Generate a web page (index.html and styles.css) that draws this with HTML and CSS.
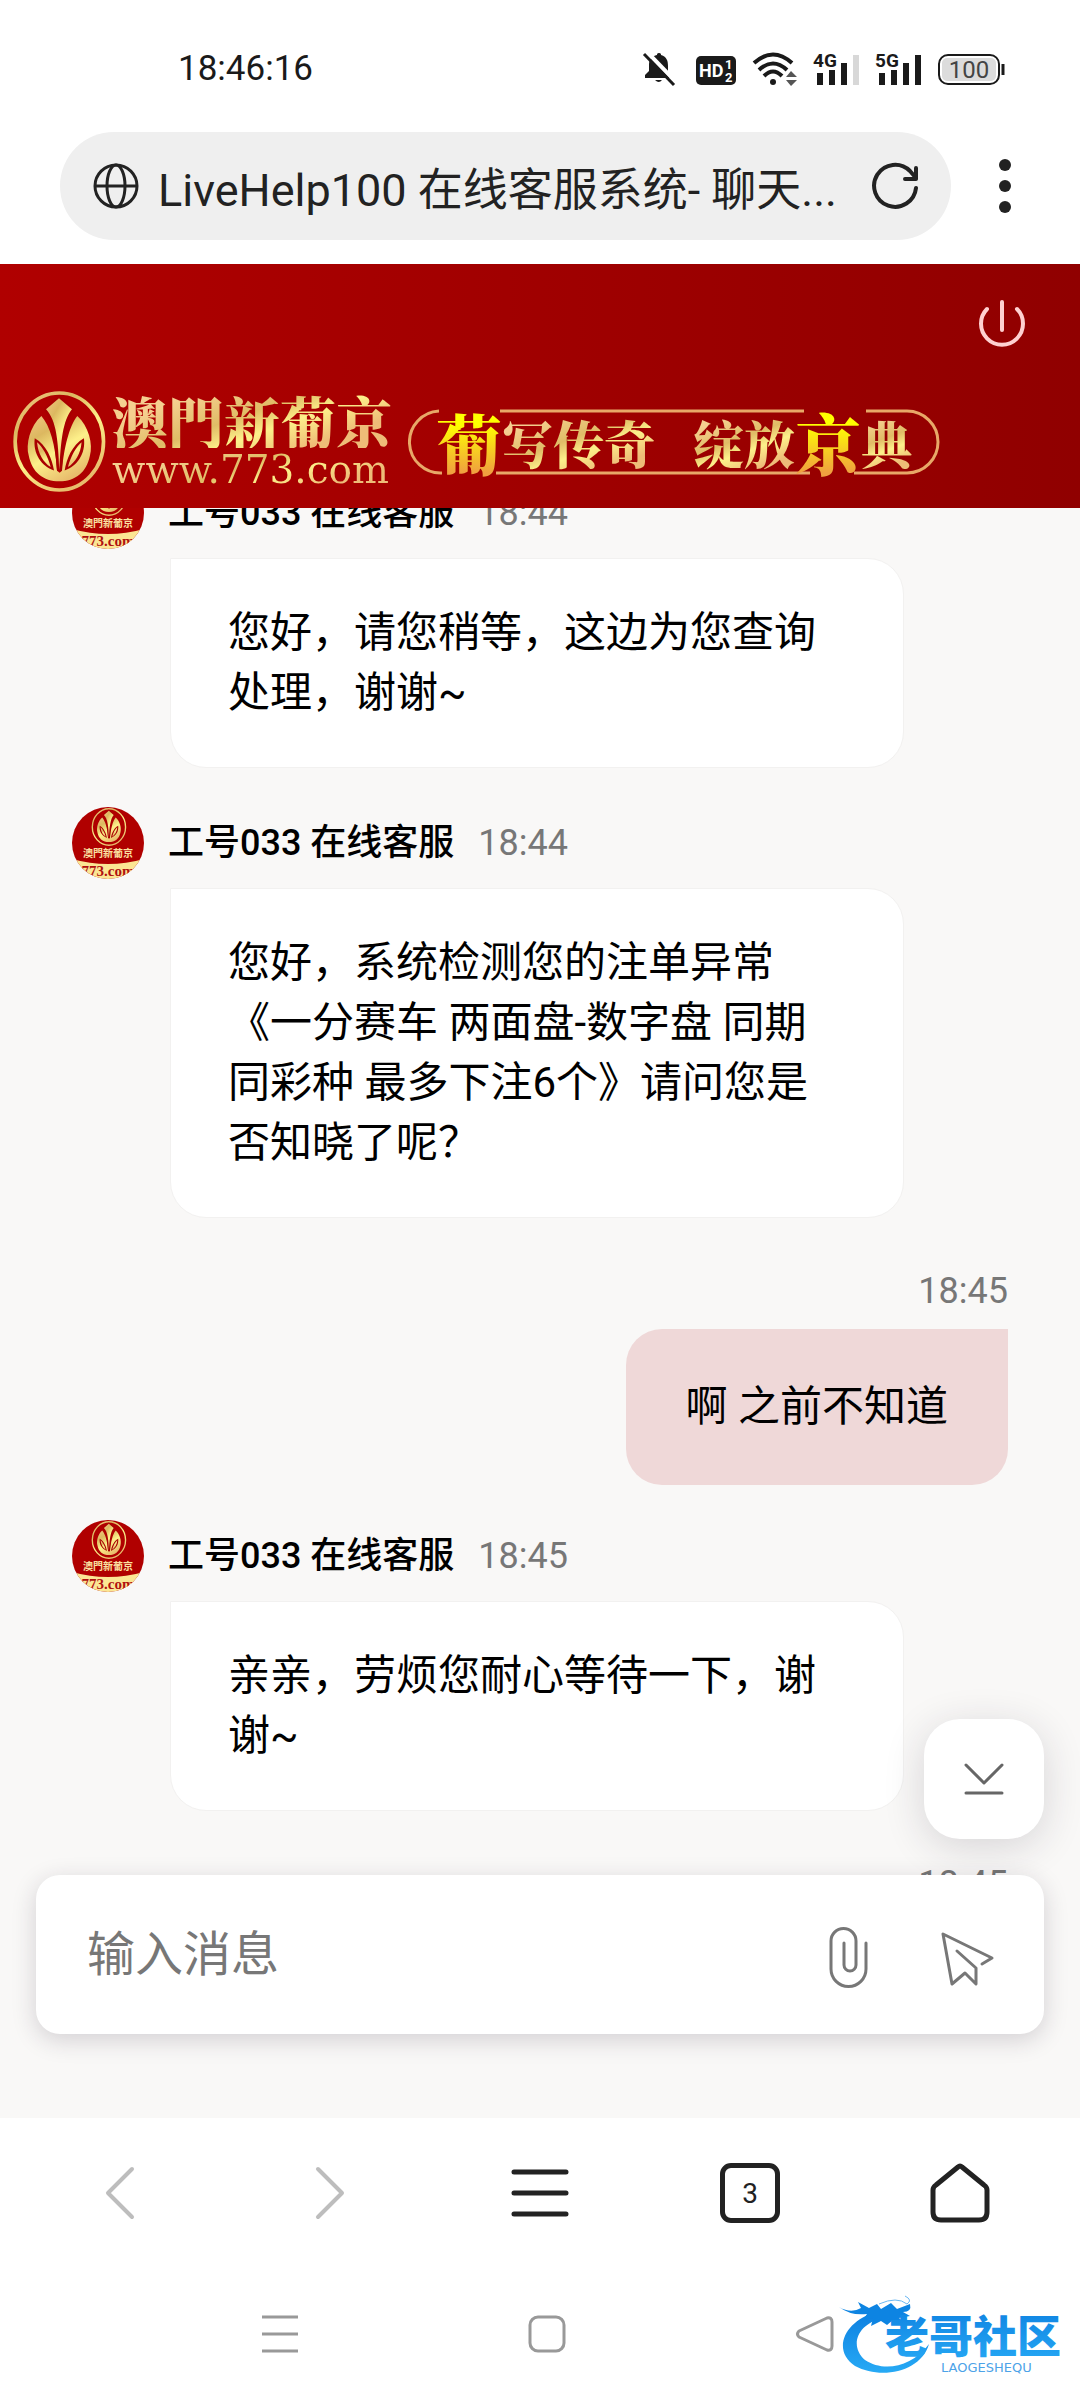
FILE: index.html
```html
<!DOCTYPE html>
<html lang="zh-CN">
<head>
  <meta charset="UTF-8">
  <meta name="viewport" content="width=device-width, initial-scale=1">
  <title>LiveHelp100 在线客服系统- 聊天</title>
  <link rel="stylesheet" href="styles.css">
</head>
<body>

  <!-- shared drawings -->
  <svg class="defs" width="0" height="0" aria-hidden="true">
    <defs>
      <linearGradient id="gold" x1="0" y1="0" x2="0.6" y2="1">
        <stop offset="0" stop-color="#f3c583"/>
        <stop offset="0.3" stop-color="#dcb860"/>
        <stop offset="0.6" stop-color="#fdf08a"/>
        <stop offset="1" stop-color="#e8bc6c"/>
      </linearGradient>
      <linearGradient id="blue" x1="0" y1="0" x2="0" y2="1">
        <stop offset="0" stop-color="#0d7fe0"/>
        <stop offset="1" stop-color="#27aaf5"/>
      </linearGradient>
      <symbol id="emblem" viewBox="0 0 277 304">
        <ellipse cx="138" cy="152" rx="133" ry="146" fill="none" stroke="url(#gold)" stroke-width="11"/>
        <path d="M84 75C50 105 36 160 46 195C56 245 90 272 138 272S220 245 230 195C240 160 226 105 192 75C168 105 152 170 146 240L139 246L131 240C126 160 110 105 84 75Z" fill="url(#gold)"/>
        <path d="M137 12L90 54C116 90 125 150 131 240H146C152 150 160 90 184 54Z" fill="#a80000"/>
        <path d="M137 22L98 55C130 90 134 150 138 238C143 150 148 90 176 55Z" fill="url(#gold)"/>
        <path d="M64 142C58 188 84 226 122 239C116 205 100 162 64 142ZM212 142C218 188 192 226 154 239C160 205 176 162 212 142Z" fill="#a80000"/>
        <path d="M71 154C86 166 104 196 112 229C90 214 74 190 71 154ZM205 154C190 166 172 196 164 229C186 214 202 190 205 154Z" fill="url(#gold)"/>
      </symbol>
      <symbol id="avatar" viewBox="0 0 72 72">
        <rect width="72" height="72" fill="#b00000"/>
        <use href="#emblem" x="19" y="1" width="36" height="38"/>
        <text x="36" y="50" class="avatar-name">澳門新葡京</text>
        <path d="M0 52Q36 62 72 52V72H0Z" fill="#fbe694"/>
        <text x="36" y="69" class="avatar-url">773.com</text>
      </symbol>
    </defs>
  </svg>

  <div class="status-bar">
    <time>18:46:16</time>
    <div class="status-icons">
      <svg width="36" height="34" viewBox="0 0 36 34">
        <path d="M16 1C18 1 18 2 18 3C24 5 25 9 25 14V20L28 24V26H2V23L6 19V13C6 7 9 4 14 3C14 2 14 1 16 1ZM12 28H19Q16 32 12 28Z" fill="#1a1a1a"/>
        <path d="M4 0L35 32" stroke="#fff" stroke-width="4"/>
        <path d="M1 2L31 33" stroke="#1a1a1a" stroke-width="3"/>
      </svg>
      <svg width="42" height="34" viewBox="0 0 42 34">
        <rect x="1" y="4" width="40" height="29" rx="5" fill="#1a1a1a"/>
        <text x="4" y="25" class="hd">HD</text>
        <text x="30" y="17" class="hd-small">1</text>
        <text x="30" y="30" class="hd-small">2</text>
      </svg>
      <svg width="44" height="34" viewBox="0 0 44 34">
        <g fill="none" stroke="#1a1a1a" stroke-width="4">
          <path d="M1 11Q20 -6 39 11"/>
          <path d="M6 18Q20 5 34 18"/>
          <path d="M11 24Q20 15 29 24"/>
        </g>
        <circle cx="20" cy="30" r="3" fill="#1a1a1a"/>
        <path d="M33 25L38 19L44 25ZM33 28L38 34L44 28Z" fill="#555"/>
      </svg>
      <svg width="46" height="34" viewBox="0 0 46 34">
        <text x="0" y="15" class="net">4G</text>
        <path d="M7 21V33M19 18V33M31 11V33" stroke="#1a1a1a" stroke-width="6"/>
        <path d="M43 3V33" stroke="#d8d8d8" stroke-width="6"/>
      </svg>
      <svg width="46" height="34" viewBox="0 0 46 34">
        <text x="0" y="15" class="net">5G</text>
        <path d="M7 21V33M19 18V33M31 11V33M43 3V33" stroke="#1a1a1a" stroke-width="6"/>
      </svg>
      <svg width="68" height="34" viewBox="0 0 68 34">
        <rect x="2" y="3" width="60" height="29" rx="9" fill="#fff" stroke="#1a1a1a" stroke-width="2"/>
        <rect x="5" y="6" width="54" height="23" rx="5" fill="#dcdcdc"/>
        <path d="M66 12V23" stroke="#1a1a1a" stroke-width="3"/>
        <text x="32" y="26" class="battery">100</text>
      </svg>
    </div>
  </div>

  <div class="browser-bar">
    <div class="address">
      <svg width="48" height="48" viewBox="0 0 48 48" fill="none" stroke="#222" stroke-width="3">
        <circle cx="24" cy="24" r="21"/>
        <ellipse cx="24" cy="24" rx="9" ry="21"/>
        <path d="M3 24H45"/>
      </svg>
      <a class="page-title" href="#">LiveHelp100 在线客服系统- 聊天...</a>
      <button class="icon-btn" aria-label="刷新">
        <svg width="48" height="48" viewBox="0 0 48 48" fill="none" stroke="#222" stroke-width="4" stroke-linecap="round" stroke-linejoin="round">
          <path d="M45 26A21 21 0 1 1 39 9L45 16"/>
          <path d="M45 6V17H34"/>
        </svg>
      </button>
    </div>
    <button class="icon-btn" aria-label="更多">
      <svg width="24" height="60" viewBox="0 0 24 60" fill="#222">
        <circle cx="12" cy="9" r="6"/><circle cx="12" cy="30" r="6"/><circle cx="12" cy="51" r="6"/>
      </svg>
    </button>
  </div>

  <header class="banner">
    <button class="icon-btn power" aria-label="结束对话">
      <svg width="60" height="60" viewBox="0 0 60 60" fill="none" stroke="#ffd0d0" stroke-width="4" stroke-linecap="round">
        <path d="M15 17A21 21 0 1 0 45 17"/>
        <path d="M30 10V38"/>
      </svg>
    </button>
    <div class="brand">
      <svg class="brand-logo" width="93" height="101"><use href="#emblem" width="93" height="101"/></svg>
      <div class="brand-text">
        <span class="brand-name">澳門新葡京</span>
        <span class="brand-url">www.773.com</span>
      </div>
      <div class="slogan">
        <svg class="slogan-frame" width="532" height="66" viewBox="0 0 532 66" fill="none" stroke="#e8a868" stroke-width="3">
          <path d="M31 2A31 31 0 0 0 34 64M92 2H396M88 64H402M458 2H499A31 31 0 0 1 499 64H446"/>
        </svg>
        <em>葡</em><span>写传奇</span><span class="second">绽放</span><em>京</em><span>典</span>
      </div>
    </div>
  </header>

  <main class="chat">
    <div class="log">
      <article class="msg">
        <div class="msg-head">
          <svg class="avatar" width="72" height="72"><use href="#avatar"/></svg>
          <b>工号033 在线客服</b>
          <time>18:44</time>
        </div>
        <p class="bubble">您好，请您稍等，这边为您查询处理，谢谢~</p>
      </article>

      <article class="msg">
        <div class="msg-head">
          <svg class="avatar" width="72" height="72"><use href="#avatar"/></svg>
          <b>工号033 在线客服</b>
          <time>18:44</time>
        </div>
        <p class="bubble">您好，系统检测您的注单异常《一分赛车 两面盘-数字盘 同期同彩种 最多下注6个》请问您是否知晓了呢？</p>
      </article>

      <article class="msg mine">
        <div class="msg-head"><time>18:45</time></div>
        <p class="bubble">啊 之前不知道</p>
      </article>

      <article class="msg">
        <div class="msg-head">
          <svg class="avatar" width="72" height="72"><use href="#avatar"/></svg>
          <b>工号033 在线客服</b>
          <time>18:45</time>
        </div>
        <p class="bubble">亲亲，劳烦您耐心等待一下，谢谢~</p>
      </article>

      <article class="msg mine">
        <div class="msg-head"><time>18:45</time></div>
      </article>
    </div>

    <div class="dock">
      <button class="to-bottom" aria-label="滚动到底部">
        <svg width="40" height="40" viewBox="0 0 40 40" fill="none" stroke="#666" stroke-width="3" stroke-linecap="round" stroke-linejoin="round">
          <path d="M2 6L20 24L38 6M2 34H38"/>
        </svg>
      </button>
      <form class="composer">
        <input type="text" placeholder="输入消息" aria-label="输入消息">
        <button type="button" class="icon-btn" aria-label="附件">
          <svg width="60" height="68" viewBox="0 0 60 68" fill="none" stroke="#777" stroke-width="3" stroke-linecap="round">
            <path d="M26 22V44A6 6 0 0 0 38 44V20A12 12 0 0 0 13 20V48A17 17 0 0 0 48 48V22"/>
          </svg>
        </button>
        <button type="button" class="icon-btn" aria-label="发送">
          <svg width="60" height="66" viewBox="0 0 60 66" fill="none" stroke="#777" stroke-width="3" stroke-linecap="round" stroke-linejoin="round">
            <path d="M44 42L54 36L5 12L14 62L27 51L38 62V46L19 29"/>
          </svg>
        </button>
      </form>
    </div>
  </main>

  <nav class="browser-nav">
    <button class="icon-btn" aria-label="后退">
      <svg width="60" height="60" viewBox="0 0 60 60" fill="none" stroke="#bdbdbd" stroke-width="4" stroke-linecap="round" stroke-linejoin="round"><path d="M42 6L18 30L42 54"/></svg>
    </button>
    <button class="icon-btn" aria-label="前进">
      <svg width="60" height="60" viewBox="0 0 60 60" fill="none" stroke="#bdbdbd" stroke-width="4" stroke-linecap="round" stroke-linejoin="round"><path d="M18 6L42 30L18 54"/></svg>
    </button>
    <button class="icon-btn" aria-label="菜单">
      <svg width="60" height="60" viewBox="0 0 60 60" stroke="#222" stroke-width="5" stroke-linecap="round"><path d="M4 9H56M4 30H56M4 51H56"/></svg>
    </button>
    <button class="tabs" aria-label="标签页">3</button>
    <button class="icon-btn" aria-label="主页">
      <svg width="60" height="60" viewBox="0 0 60 60" fill="none" stroke="#222" stroke-width="5" stroke-linejoin="round"><path d="M3 27Q3 24 6 22L28 4Q30 2 32 4L54 22Q57 24 57 27V49Q57 57 49 57H11Q3 57 3 49Z"/></svg>
    </button>
  </nav>

  <footer class="system-nav">
    <button class="icon-btn" aria-label="最近任务">
      <svg width="40" height="40" viewBox="0 0 40 40" stroke="#999" stroke-width="3"><path d="M2 3H38M2 20H38M2 37H38"/></svg>
    </button>
    <button class="icon-btn" aria-label="桌面">
      <svg width="40" height="40" viewBox="0 0 40 40" fill="none" stroke="#999" stroke-width="3"><rect x="3" y="3" width="34" height="34" rx="8"/></svg>
    </button>
    <button class="icon-btn" aria-label="返回">
      <svg width="40" height="40" viewBox="0 0 40 40" fill="none" stroke="#999" stroke-width="3" stroke-linejoin="round"><path d="M4 17L32 4Q37 3 37 8V32Q37 37 32 36L4 23Q1 20 4 17Z"/></svg>
    </button>
    <svg class="watermark" width="232" height="90" viewBox="0 0 232 90">
      <path d="M38 20C6 28 -8 58 16 74C42 88 82 80 90 52C72 76 44 80 26 68C10 54 18 32 44 26Z" fill="url(#blue)"/>
      <path d="M0 15Q12 22 22 16L19 10L30 16L38 12L42 17L52 11L58 17L71 12Q73 20 64 20L71 24L60 26L66 31L54 28L48 33L42 29L32 34L34 26L24 28L28 22Q12 24 0 15Z" fill="#0d84e2"/>
      <path d="M40 12Q58 4 68 12Q74 8 66 4" fill="none" stroke="#6bb8f2"/>
      <text x="46" y="61" class="mark-name">老哥社区</text>
      <text x="102" y="80" class="mark-latin">LAOGESHEQU</text>
    </svg>
  </footer>

</body>
</html>
```
FILE: styles.css
```css
* {
  box-sizing: border-box;
}

body {
  margin: 0;
  min-height: 100vh;
  display: flex;
  flex-direction: column;
  background: #fff;
  color: #000;
  font-family: Roboto, "Noto Sans CJK SC", sans-serif;
}

svg {
  display: block;
  flex: none;
}

button {
  font-family: inherit;
  cursor: pointer;
}

.defs {
  position: absolute;
}

.icon-btn {
  padding: 0;
  border: none;
  background: none;
}

/* status bar */
.status-bar {
  height: 132px;
  padding: 5px 75px 0 178px;
  display: flex;
  align-items: center;
  justify-content: space-between;
  color: #1a1a1a;
  font-size: 35px;
}

.status-icons {
  display: flex;
  gap: 16px;
}

.status-icons svg {
  overflow: visible;
}

.hd {
  fill: #fff;
  font-size: 18px;
  font-weight: bold;
}

.hd-small {
  fill: #fff;
  font-size: 13px;
  font-weight: bold;
}

.net {
  fill: #1a1a1a;
  font-size: 19px;
  font-weight: bold;
}

.battery {
  fill: #444;
  font-size: 24px;
  text-anchor: middle;
}

/* browser address bar */
.browser-bar {
  display: flex;
  align-items: center;
  gap: 42px;
  padding: 0 63px 24px 60px;
}

.address {
  flex: 1;
  min-width: 0;
  height: 108px;
  padding: 0 32px;
  display: flex;
  align-items: center;
  gap: 18px;
  border-radius: 54px;
  background: #efefef;
}

.page-title {
  flex: 1;
  overflow: hidden;
  white-space: nowrap;
  color: #222;
  font-size: 45px;
  text-decoration: none;
}

/* red banner */
.banner {
  position: relative;
  z-index: 1;
  padding: 28px 48px 16px 13px;
  background: linear-gradient(90deg, #b00000, #900000);
}

.power {
  display: block;
  margin: 0 0 39px auto;
}

.brand {
  display: flex;
  align-items: center;
}

.brand-text {
  display: flex;
  flex-direction: column;
  margin: 0 16px 0 6px;
}

.brand-name,
.brand-url,
.slogan em,
.slogan span {
  color: transparent;
  background: linear-gradient(160deg, #f5cf90 20%, #e0bc66 45%, #fdf08a 60%, #eebc78 80%);
  -webkit-background-clip: text;
  background-clip: text;
  white-space: nowrap;
}

.brand-name {
  font-family: "Noto Serif CJK TC", "Noto Sans CJK TC", serif;
  font-size: 56px;
  font-weight: 900;
  line-height: 56px;
}

.brand-url {
  font-family: "DejaVu Serif", serif;
  font-size: 39px;
  line-height: 44px;
}

.slogan {
  position: relative;
  display: flex;
  align-items: center;
  height: 66px;
  padding-left: 28px;
  font-family: "Noto Serif CJK SC", "Noto Sans CJK SC", serif;
  font-size: 51px;
  font-weight: 900;
  line-height: 66px;
}

.slogan-frame {
  position: absolute;
  top: 0;
  left: 0;
}

.slogan em {
  position: relative;
  background-image: linear-gradient(#ff0 30%, #f0a040 85%);
  font-size: 66px;
  font-style: normal;
  line-height: 88px;
}

.slogan .second {
  margin-left: 38px;
}

/* chat */
.chat {
  position: relative;
  flex: 1;
  overflow: hidden;
  background: #f9f8f7;
}

.log {
  margin-top: -31px;
  padding: 0 72px;
}

.msg {
  margin-bottom: 39px;
}

.msg-head {
  display: flex;
  align-items: center;
  gap: 24px;
  height: 72px;
  margin-bottom: 9px;
  font-size: 36px;
  line-height: 36px;
}

.msg-head b {
  font-weight: 500;
}

.msg-head time {
  color: #777;
}

.avatar {
  border-radius: 50%;
}

.avatar-name {
  fill: #fbe0a0;
  font: bold 10px "Noto Sans CJK TC", sans-serif;
  text-anchor: middle;
}

.avatar-url {
  fill: #b01010;
  font: bold 15px "Liberation Serif", serif;
  text-anchor: middle;
}

.bubble {
  width: fit-content;
  max-width: 734px;
  margin: 0 0 0 98px;
  padding: 44px 57px;
  border: 1px solid #f2f1f0;
  border-radius: 0 36px 36px 36px;
  background: #fff;
  font-size: 42px;
  line-height: 60px;
}

.mine {
  margin-bottom: 35px;
}

.mine .msg-head {
  justify-content: flex-end;
  height: 68px;
  margin-bottom: 4px;
}

.mine .bubble {
  margin-left: auto;
  padding: 48px 60px;
  border: none;
  border-radius: 36px 0 36px 36px;
  background: #efd8d8;
}

/* floats over the end of the log */
.dock {
  position: absolute;
  right: 36px;
  bottom: 84px;
  left: 36px;
  display: flex;
  flex-direction: column;
  align-items: flex-end;
  gap: 36px;
}

.to-bottom {
  display: grid;
  place-items: center;
  width: 120px;
  height: 120px;
  padding: 0;
  border: none;
  border-radius: 36px;
  background: #fff;
  box-shadow: 0 8px 40px rgba(40, 30, 50, 0.16);
}

.composer {
  width: 100%;
  height: 159px;
  padding: 0 46px 0 51px;
  display: flex;
  align-items: center;
  gap: 60px;
  border-radius: 24px;
  background: #fff;
  box-shadow: 0 6px 24px rgba(40, 30, 50, 0.18);
}

.composer input {
  flex: 1;
  min-width: 0;
  padding: 0;
  border: none;
  outline: none;
  background: none;
  color: #000;
  font-family: inherit;
  font-size: 48px;
}

.composer input::placeholder {
  color: #777;
}

/* bottom bars */
.browser-nav {
  display: grid;
  grid-template-columns: repeat(5, 1fr);
  place-items: center;
  height: 150px;
  padding: 0 15px;
}

.tabs {
  width: 60px;
  height: 60px;
  padding: 0;
  border: 5px solid #222;
  border-radius: 11px;
  background: none;
  color: #222;
  font-size: 28px;
}

.system-nav {
  position: relative;
  display: grid;
  grid-template-columns: repeat(3, 1fr);
  place-items: center;
  height: 132px;
  padding: 0 131px 0 146px;
}

.watermark {
  position: absolute;
  right: 9px;
  bottom: 18px;
}

.mark-name {
  fill: url(#blue);
  font-family: "Noto Sans CJK SC", sans-serif;
  font-size: 44px;
  font-weight: 900;
}

.mark-latin {
  fill: #4da3e8;
  font-family: "DejaVu Sans", sans-serif;
  font-size: 13px;
}
```
